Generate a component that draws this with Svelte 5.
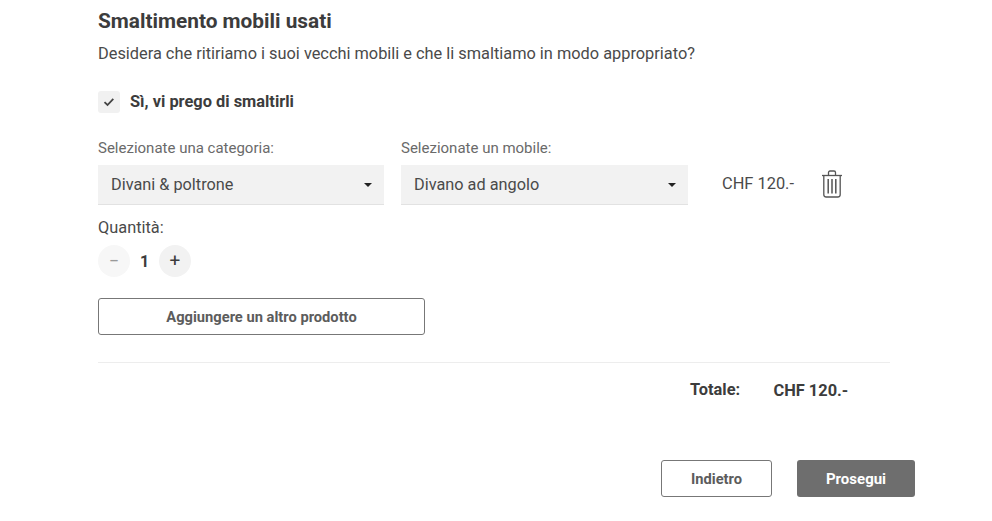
<script>
  let qty = $state(1);
</script>

<main class="page">
  <section class="content">
    <h2>Smaltimento mobili usati</h2>
    <p class="lead">Desidera che ritiriamo i suoi vecchi mobili e che li smaltiamo in modo appropriato?</p>

    <label class="check">
      <span class="box">
        <svg width="12" height="10" viewBox="0 0 12 10" fill="none"><path d="M1.5 5.2 4.5 8 10.3 1.8" stroke="#444" stroke-width="1.8"/></svg>
      </span>
      <span>Sì, vi prego di smaltirli</span>
    </label>

    <div class="row">
      <div class="field">
        <span class="label">Selezionate una categoria:</span>
        <div class="select"><span>Divani &amp; poltrone</span><i class="caret"></i></div>
      </div>
      <div class="field wide">
        <span class="label">Selezionate un mobile:</span>
        <div class="select"><span>Divano ad angolo</span><i class="caret"></i></div>
      </div>
      <span class="price">CHF 120.-</span>
      <svg class="trash" width="22" height="28" viewBox="0 0 22 28" fill="none" stroke="#555" stroke-width="1.3">
        <path d="M1 5.5H21" />
        <path d="M7.5 5.2V2.6C7.5 1.6 8.2 1 9 1H13C13.8 1 14.5 1.6 14.5 2.6V5.2" />
        <path d="M2.8 5.5V24.5C2.8 26 3.8 27 5.2 27H16.8C18.2 27 19.2 26 19.2 24.5V5.5" />
        <path d="M7.2 9V23.5M11 9V23.5M14.8 9V23.5" stroke-width="1.5" />
      </svg>
    </div>

    <div class="qty-label">Quantità:</div>
    <div class="qty">
      <button class="round off" aria-label="meno">−</button>
      <span class="num">{qty}</span>
      <button class="round" aria-label="più">+</button>
    </div>

    <button class="outline add">Aggiungere un altro prodotto</button>

    <hr />

    <div class="total">
      <strong class="t-label">Totale:</strong>
      <strong class="t-value">CHF 120.-</strong>
    </div>
  </section>

  <div class="actions">
    <button class="outline back">Indietro</button>
    <button class="primary">Prosegui</button>
  </div>
</main>

<style>
  :global(body) {
    margin: 0;
    background: #fff;
    font-family: Roboto, "Liberation Sans", sans-serif;
    color: #3c3c3c;
  }
  .page {
    width: 992px;
    height: 521px;
    overflow: hidden;
    box-sizing: border-box;
    padding: 9px 77px 0 98px;
  }
  .content {
    width: 792px;
  }
  h2 {
    margin: 0;
    font-size: 20.8px;
    line-height: 24px;
    font-weight: 700;
    color: #3c3c3c;
  }
  .lead {
    margin: 9px 0 0;
    font-size: 16.35px;
    line-height: 24px;
    color: #4a4a4a;
  }
  .check {
    display: flex;
    align-items: center;
    gap: 10px;
    margin-top: 25px;
    font-size: 16.4px;
    font-weight: 700;
    line-height: 22px;
    color: #3c3c3c;
  }
  .box {
    width: 22px;
    height: 22px;
    border-radius: 3px;
    background: #f1f1f1;
    display: flex;
    align-items: center;
    justify-content: center;
  }
  .row {
    display: flex;
    align-items: flex-end;
    margin-top: 26px;
  }
  .field {
    display: flex;
    flex-direction: column;
    width: 286px;
    margin-right: 17px;
  }
  .field.wide {
    width: 287px;
  }
  .label {
    font-size: 15px;
    line-height: 18px;
    color: #6a6a6a;
    margin-bottom: 8px;
  }
  .select {
    height: 40px;
    box-sizing: border-box;
    background: #f2f2f2;
    border-bottom: 1px solid #e2e2e2;
    display: flex;
    align-items: center;
    justify-content: space-between;
    padding: 0 12px 0 13px;
    font-size: 16.3px;
    color: #4a4a4a;
  }
  .caret {
    width: 0;
    height: 0;
    border-left: 4px solid transparent;
    border-right: 4px solid transparent;
    border-top: 4px solid #222;
  }
  .price {
    margin-left: 17px;
    width: 99px;
    font-size: 16.4px;
    line-height: 41px;
    align-self: flex-end;
    color: #4a4a4a;
    padding-bottom: 1px;
  }
  .trash {
    margin-bottom: 7px;
  }
  .qty-label {
    margin-top: 13px;
    font-size: 16.35px;
    line-height: 20px;
    color: #4a4a4a;
  }
  .qty {
    display: flex;
    align-items: center;
    margin-top: 7px;
  }
  .round {
    width: 32px;
    height: 32px;
    border: 0;
    border-radius: 50%;
    background: #f2f2f2;
    padding: 0;
    font-family: inherit;
    font-size: 19px;
    line-height: 32px;
    color: #3c3c3c;
  }
  .round.off {
    background: #f7f7f7;
    color: #999;
    font-size: 18px;
  }
  .num {
    width: 29px;
    text-align: center;
    font-size: 16px;
    font-weight: 700;
  }
  .outline {
    box-sizing: border-box;
    height: 37px;
    background: #fff;
    border: 1px solid #777;
    border-radius: 3px;
    font-family: inherit;
    font-size: 14.7px;
    font-weight: 700;
    color: #5c5c5c;
    padding: 0;
  }
  .add {
    display: block;
    width: 327px;
    margin-top: 21px;
  }
  hr {
    border: 0;
    border-top: 1px solid #ededed;
    margin: 27px 0 0;
  }
  .total {
    display: flex;
    margin-top: 17px;
    padding-left: 592px;
    font-size: 16.4px;
    line-height: 20px;
    color: #3c3c3c;
  }
  .t-label, .t-value {
    font-weight: 700;
  }
  .t-label {
    width: 83.5px;
  }
  .t-value {
    padding-top: 1px;
  }
  .actions {
    display: flex;
    justify-content: flex-end;
    gap: 25px;
    margin-top: 59px;
  }
  .back {
    width: 111px;
  }
  .primary {
    width: 118px;
    height: 37px;
    border: 0;
    border-radius: 3px;
    background: #6e6e6e;
    color: #fff;
    font-family: inherit;
    font-size: 15px;
    font-weight: 700;
  }
</style>
